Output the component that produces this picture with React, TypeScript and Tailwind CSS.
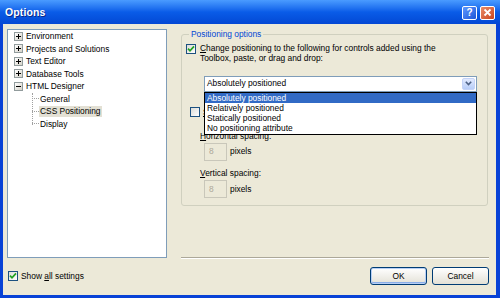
import React from "react";

// XP-style check mark
const Check = () => (
  <svg width="8" height="8" viewBox="0 0 8 8" className="block">
    <path d="M1 3.6 L3 5.8 L7 1.4" stroke="#21a121" strokeWidth="1.7" fill="none" />
  </svg>
);

const CheckBox = ({ checked, className = "" }: { checked?: boolean; className?: string }) => (
  <div
    className={`w-[10px] h-[10px] shrink-0 border border-[#1c5180] bg-gradient-to-br from-[#dcdcd7] to-white flex items-center justify-center ${className}`}
  >
    {checked && <Check />}
  </div>
);

const Expander = ({ open }: { open?: boolean }) => (
  <div className="relative w-[9px] h-[9px] shrink-0 border border-[#919b9c] bg-gradient-to-br from-white to-[#d6d3c9]">
    <div className="absolute left-[1px] right-[1px] top-[3px] h-px bg-black" />
    {!open && <div className="absolute top-[1px] bottom-[1px] left-[3px] w-px bg-black" />}
  </div>
);

const roots = ["Environment", "Projects and Solutions", "Text Editor", "Database Tools"];
const children = ["General", "CSS Positioning", "Display"];
const choices = [
  "Absolutely positioned",
  "Relatively positioned",
  "Statically positioned",
  "No positioning attribute",
];

export default function App() {
  return (
    <div className="w-[500px] h-[298px] flex flex-col overflow-hidden bg-[#0842d6] font-['Liberation_Sans',Arial,sans-serif] text-[8.4px] text-black leading-[10.5px]">
      {/* TITLE BAR */}
      <div className="h-[24px] shrink-0 flex items-center justify-between pl-[5px] pr-[5px] bg-gradient-to-b from-[#4a9bff] via-[#0a5ce8] to-[#0448d4]">
        <span className="text-white font-bold text-[10.5px] [text-shadow:1px_1px_0_#0a2a8a] tracking-[0.1px]">
          Options
        </span>
        <div className="flex gap-[3px] mt-[1px]">
          <div className="w-[15px] h-[14px] rounded-[2px] border border-white bg-gradient-to-br from-[#5f98ff] to-[#1d55d8] flex items-center justify-center text-white font-bold text-[10px] leading-none">
            ?
          </div>
          <div className="w-[15px] h-[14px] rounded-[2px] border border-white bg-gradient-to-br from-[#e98a66] to-[#c9441c] flex items-center justify-center">
            <svg width="9" height="9" viewBox="0 0 9 9">
              <path d="M1.5 1.5 L7.5 7.5 M7.5 1.5 L1.5 7.5" stroke="white" strokeWidth="1.8" />
            </svg>
          </div>
        </div>
      </div>

      {/* BODY */}
      <div className="flex-1 ml-[3px] mr-[4px] mb-[3px] bg-[#ece9d8] flex flex-col">
        <div className="flex pt-[5px] pl-[4px]">
          {/* TREE */}
          <div className="w-[160px] h-[229px] shrink-0 bg-white border border-[#7f9db9]">
            {roots.map((r) => (
              <div key={r} className="h-[12.5px] flex items-center pl-[6px] gap-[3px]">
                <Expander />
                <span>{r}</span>
              </div>
            ))}
            <div className="h-[12.5px] flex items-center pl-[6px] gap-[3px]">
              <Expander open />
              <span>HTML Designer</span>
            </div>
            <div className="relative">
              <div className="absolute left-[24px] top-0 h-[32px] border-l border-dotted border-[#a0a0a0]" />
              {children.map((c) => (
                <div key={c} className="h-[12.5px] flex items-center pl-[24px]">
                  <div className="w-[7px] border-t border-dotted border-[#a0a0a0]" />
                  <span
                    className={`px-[1px] ${c === "CSS Positioning" ? "bg-[#e3e0d4]" : ""}`}
                  >
                    {c}
                  </span>
                </div>
              ))}
            </div>
          </div>

          {/* RIGHT PANEL */}
          <div className="ml-[14px] w-[307px] flex flex-col">
            <fieldset className="h-[177px] border border-[#d0d0bf] rounded-[3px] pl-[4px] pr-[10px]">
              <legend className="ml-[3px] px-[2px] text-[#0046d5]">Positioning options</legend>

              <div className="flex items-start mt-[3px]">
                <CheckBox checked className="mt-[1px]" />
                <div className="ml-[4px]">
                  <div>
                    <u>C</u>hange positioning to the following for controls added using the
                  </div>
                  <div>Toolbox, paste, or drag and drop:</div>
                </div>
              </div>

              {/* SELECT + OPEN LIST */}
              <div className="relative ml-[18px] mt-[12px] w-[273px]">
                <div className="h-[16px] bg-white border border-[#7f9db9] flex items-center justify-between pl-[2px] pr-[1px]">
                  <span>Absolutely positioned</span>
                  <div className="w-[13px] h-[12px] rounded-[2px] bg-gradient-to-b from-[#e2eafe] to-[#b7cdf8] border border-[#c4d3f7] flex items-center justify-center">
                    <svg width="7" height="5" viewBox="0 0 7 5">
                      <path d="M0.8 0.8 L3.5 3.6 L6.2 0.8" stroke="#4d6185" strokeWidth="1.6" fill="none" />
                    </svg>
                  </div>
                </div>
                <div className="absolute left-0 top-full w-full h-[43px] bg-white border border-black z-10">
                  {choices.map((c, i) => (
                    <div
                      key={c}
                      className={`h-[10.3px] pl-[2px] leading-[10.3px] ${
                        i === 0 ? "bg-[#316ac5] text-white" : ""
                      }`}
                    >
                      {c}
                    </div>
                  ))}
                </div>
              </div>

              <div className="flex items-center mt-[15px] ml-[4px]">
                <CheckBox />
                <span className="ml-[3px]">
                  <u>S</u>nap to grid
                </span>
              </div>

              <div className="ml-[14px] mt-[14px]">
                <u>H</u>orizontal spacing:
              </div>
              <div className="flex items-center ml-[18px] mt-[1px] gap-[3px]">
                <div className="w-[23px] h-[18px] border border-[#c9c7ba] bg-[#ece9d8] text-[#aca899] pl-[4px] flex items-center">
                  8
                </div>
                <span>pixels</span>
              </div>

              <div className="ml-[14px] mt-[7px]">
                <u>V</u>ertical spacing:
              </div>
              <div className="flex items-center ml-[18px] mt-[2px] gap-[3px]">
                <div className="w-[23px] h-[18px] border border-[#c9c7ba] bg-[#ece9d8] text-[#aca899] pl-[4px] flex items-center">
                  8
                </div>
                <span>pixels</span>
              </div>
            </fieldset>

            <div className="flex-1" />
            <div className="h-[2px] border-t border-[#aca899] border-b border-b-white -mr-[1px] mb-[-1px]" />
          </div>
        </div>

        {/* BOTTOM ROW */}
        <div className="flex-1 flex items-center pl-[5px] pr-[7px] pb-[1px]">
          <CheckBox checked />
          <span className="ml-[3px]">
            Show <u>a</u>ll settings
          </span>
          <div className="flex-1" />
          <div className="flex gap-[5px]">
            <button className="w-[57px] h-[18px] rounded-[3px] border border-[#003c74] bg-gradient-to-b from-white to-[#e3e1d6] shadow-[inset_0_0_0_1px_#b7cff5,inset_0_-1px_0_1px_#8aaee8]">
              OK
            </button>
            <button className="w-[57px] h-[18px] rounded-[3px] border border-[#003c74] bg-gradient-to-b from-white to-[#e3e1d6]">
              Cancel
            </button>
          </div>
        </div>
      </div>
    </div>
  );
}
